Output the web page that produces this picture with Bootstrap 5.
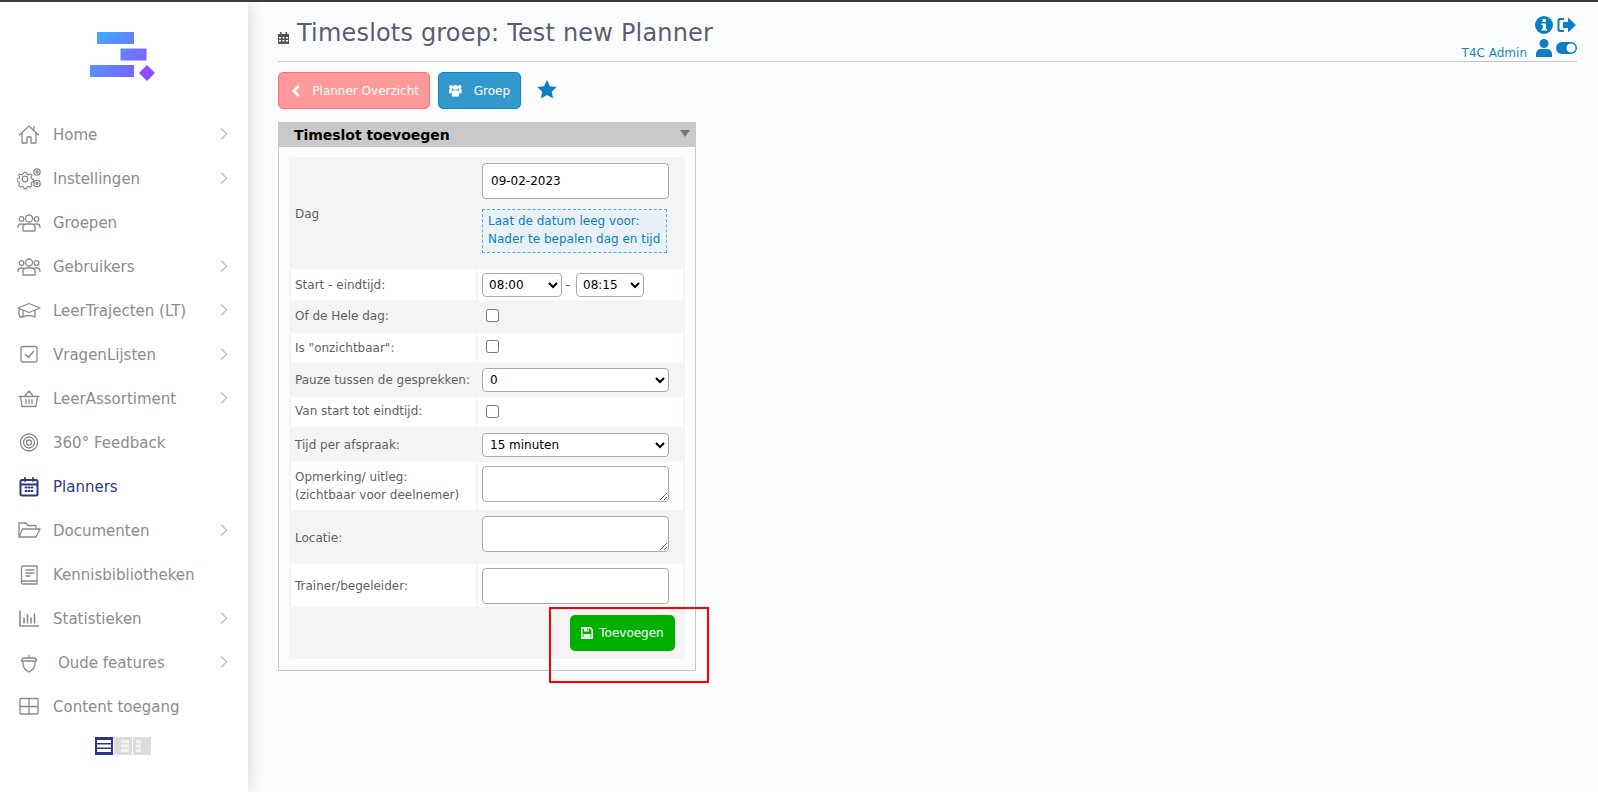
<!DOCTYPE html>
<html lang="nl"><head><meta charset="utf-8"><title>Timeslots</title>
<link href="https://cdn.jsdelivr.net/npm/bootstrap@5.3.0/dist/css/bootstrap.min.css" rel="stylesheet">
<style>
html,body{height:100%;overflow:hidden}
body{background:#fbfcfe;font-family:"DejaVu Sans",sans-serif;font-size:12px;color:#5f5f5f;border-top:2px solid #3c3c3c}
.shell{height:790px}
.side{width:248px;flex:none;background:#fff;box-shadow:0 0 18px rgba(0,0,0,.16);position:relative;z-index:2;padding-top:28px}
.logo-box{height:83px;padding-left:90px}
.menu-row{height:44px;padding:0 20px 0 17px;color:#8c8c8c;font-size:15px;text-decoration:none}
.menu-row.on{color:#33397e}
.ico{width:24px;height:24px;flex:none;margin-right:12px;fill:none;stroke:#8a8a8a;stroke-width:1.3;stroke-linecap:round;stroke-linejoin:round}
.on .ico{stroke:#2f3580}
.chev{width:9px;height:14px;fill:none;stroke:#8a8a8a;stroke-width:1;margin-left:auto;margin-top:-2px}
.oude{margin-left:5px}
.lay-row{margin:8px 0 0 95px;gap:1px}
.lay{width:18px;height:18px;background:#dcdcdc;display:block}
.work{flex:1;min-width:0;padding:0 21px 0 30px;position:relative}
.head{height:60px;border-bottom:1px solid #c8c8c8}
.ttl{font-size:24px;font-weight:400;color:#5b5d74;margin:0;padding-top:15px;line-height:32px;letter-spacing:.18px}
.ttl svg{margin-right:8px;vertical-align:-3px}
.tools{width:90px;padding-top:14px}
.tool-first{margin-right:1px}
.who{color:#1a86c5;font-size:12px;white-space:nowrap;position:absolute;right:71px;top:42px}
.tool-grid{gap:5px}
.acts{margin-top:10px;gap:8px;height:37px}
.act{height:37px;font-size:12px;color:#fff;border-radius:5px;padding:0 10px;font-family:"DejaVu Sans",sans-serif}
.act:hover{color:#fff}
.act-red{background:#ff9a9a;border:1px solid #ff6d6d;width:152px;padding-left:12px}
.act-blue{background:#3399cc;border:1px solid #0b87c6;width:83px}
.fav{margin-top:-2px}
.panel{width:418px;margin-top:13px;border:1px solid #c8c8c8;border-top:0;height:549px;background:transparent}
.panel-top{height:25px;margin:0 -1px;background:#c9c9c9;color:#000;font-weight:700;font-size:14px;padding:2px 6px 0 16px;line-height:23px;letter-spacing:-.04px}
.tri{width:0;height:0;border:5px solid transparent;border-top:7px solid #777;border-bottom:0;margin-top:-5px}
.form-tbl{margin:10px 0 0 10px;width:396px;table-layout:fixed;border-collapse:separate;border-spacing:2px;background:#f4f4f4}
.form-tbl td{padding:0 5px;background:#fff;vertical-align:middle;line-height:18px}
.form-tbl tr.alt td{background:#f4f4f4}
.form-tbl td:first-child{width:185px;padding-left:4px}
.form-tbl td.top-cell{vertical-align:top;padding-top:4px}
.form-tbl td.lift{padding-bottom:2px}
.form-tbl td.drop{padding-top:2px}
.native{font-family:"DejaVu Sans",sans-serif;font-size:12px;border:1px solid #aaa;border-radius:4px;background:#fff;color:#000;display:block}
.wide{width:187px;margin-left:-1px}
.sel{height:24px;width:187px;padding-left:3px}
.box{margin:-2px 0 0 3px;display:block;width:13px;height:13px}
.dateinp{height:36px;padding-left:8px}
.tip{width:185px;height:44px;margin:10px 0 0 -1px;border:1px dashed #58b2dc;background:#e8f1f6;color:#0a7fc2;padding:2px 5px;line-height:18px;white-space:nowrap}
.time{display:inline-block;height:24px;padding-left:2px;vertical-align:middle}
.time-end{width:68px;margin-left:2px}
.time-start{width:80px;margin-left:-1px}
.save{background:#00b000;color:#fff;font-size:12px;width:105px;height:36px;border-radius:5px;border:0;padding:0;font-weight:500;gap:6px;margin-right:3px}
.save:hover{background:#00b000;color:#fff}
.area{height:36px}
.mark-box{position:absolute;left:301px;top:605px;width:160px;height:76px;border:2px solid #f00;pointer-events:none}
</style></head>
<body>
<div class="shell d-flex">
<aside class="side">
 <div class="logo-box">
  <svg width="72" height="54" viewBox="90 30 72 54"><defs><linearGradient id="g" gradientUnits="userSpaceOnUse" x1="95" y1="30" x2="150" y2="80"><stop offset="0" stop-color="#3fb0ff"/><stop offset="1" stop-color="#8b4dff"/></linearGradient></defs>
  <rect x="97" y="32" width="37" height="12" fill="url(#g)"/><rect x="120.500" y="48.500" width="26" height="12" fill="url(#g)"/><rect x="90" y="65" width="44" height="12" fill="url(#g)"/><path d="M147 65l8 8-8 8-8-8z" fill="#8b4dff"/></svg>
 </div>
 <nav class="d-flex flex-column">
 <a class="menu-row d-flex align-items-center" href="#"><svg class="ico" viewBox="0 0 24 24"><path d="M2.500 12L12 3l9.500 9M5 10v10h5v-6h4v6h5V10M17 6V3.500"/></svg><span>Home</span><svg class="chev" viewBox="0 0 9 14"><path d="M2 1.500L7.500 7 2 12.500"/></svg></a>
 <a class="menu-row d-flex align-items-center" href="#"><svg class="ico" viewBox="0 0 24 24"><circle cx="8" cy="12" r="2.800"/><path d="M7 5.500h2.400l.6 2 1.800.8 1.900-1 1.700 1.700-1 1.900.8 1.800 2 .6v2.400l-2 .6-.8 1.800 1 1.900-1.700 1.700-1.900-1-1.800.8-.6 2H7l-.6-2-1.800-.8-1.900 1L1 19.800l1-1.900-.8-1.800-2-.6v-2.400l2-.6.8-1.800-1-1.900L1.700 7.300l1.900 1 1.800-.8z" transform="translate(.8 .2) scale(.92)"/><circle cx="20" cy="5" r="3.200"/><circle cx="20" cy="5" r="1"/><circle cx="20" cy="16.500" r="3.200"/><circle cx="20" cy="16.500" r="1"/></svg><span>Instellingen</span><svg class="chev" viewBox="0 0 9 14"><path d="M2 1.500L7.500 7 2 12.500"/></svg></a>
 <a class="menu-row d-flex align-items-center" href="#"><svg class="ico" viewBox="0 0 24 24"><circle cx="12" cy="7.500" r="3.500"/><circle cx="4.500" cy="8" r="2.300"/><circle cx="19.500" cy="8" r="2.300"/><path d="M6 20v-3.500c0-2 1.500-3.500 3.500-3.500h5c2 0 3.500 1.500 3.500 3.500V20zM1 16.500c0-2 1-3.500 3-3.500h2M23 16.500c0-2-1-3.500-3-3.500h-2"/></svg><span>Groepen</span></a>
 <a class="menu-row d-flex align-items-center" href="#"><svg class="ico" viewBox="0 0 24 24"><circle cx="12" cy="7.500" r="3.500"/><circle cx="4.500" cy="8" r="2.300"/><circle cx="19.500" cy="8" r="2.300"/><path d="M6 20v-3.500c0-2 1.500-3.500 3.500-3.500h5c2 0 3.500 1.500 3.500 3.500V20zM1 16.500c0-2 1-3.500 3-3.500h2M23 16.500c0-2-1-3.500-3-3.500h-2"/></svg><span>Gebruikers</span><svg class="chev" viewBox="0 0 9 14"><path d="M2 1.500L7.500 7 2 12.500"/></svg></a>
 <a class="menu-row d-flex align-items-center" href="#"><svg class="ico" viewBox="0 0 24 24"><path d="M1 9l11-4.500L23 9l-11 4.500zM6 11.500V18c3-2 9-2 12 0v-6.500M3 10c-1.500 2-1.500 5 0 8h3"/></svg><span>LeerTrajecten (LT)</span><svg class="chev" viewBox="0 0 9 14"><path d="M2 1.500L7.500 7 2 12.500"/></svg></a>
 <a class="menu-row d-flex align-items-center" href="#"><svg class="ico" viewBox="0 0 24 24"><rect x="4" y="3.500" width="16" height="15.500" rx="1.500"/><path d="M8.500 11.500l3 3 5-6"/></svg><span>VragenLijsten</span><svg class="chev" viewBox="0 0 9 14"><path d="M2 1.500L7.500 7 2 12.500"/></svg></a>
 <a class="menu-row d-flex align-items-center" href="#"><svg class="ico" viewBox="0 0 24 24"><path d="M2 9.500h20M3.500 9.500l1.500 10h14l1.500-10M7.500 9.500L12 4l4.500 5.500M9 12.500v4M12 12.500v4M15 12.500v4"/></svg><span>LeerAssortiment</span><svg class="chev" viewBox="0 0 9 14"><path d="M2 1.500L7.500 7 2 12.500"/></svg></a>
 <a class="menu-row d-flex align-items-center" href="#"><svg class="ico" viewBox="0 0 24 24"><circle cx="12" cy="11.500" r="8.500"/><circle cx="12" cy="11.500" r="5.500"/><circle cx="12" cy="11.500" r="2.500"/></svg><span>360° Feedback</span></a>
 <a class="menu-row on d-flex align-items-center" href="#"><svg class="ico" viewBox="0 0 24 24"><path d="M5 5h14a1.500 1.500 0 0 1 1.500 1.500V19a1.500 1.500 0 0 1-1.500 1.500H5A1.500 1.500 0 0 1 3.500 19V6.500A1.500 1.500 0 0 1 5 5zM3.500 9.500h17" stroke-width="2"/><path d="M8 3v3M16 3v3M8.500 12.500h1M11.500 12.500h1M14.500 12.500h1M8.500 16h1M11.500 16h1M14.500 16h1" stroke-width="1.800"/></svg><span>Planners</span></a>
 <a class="menu-row d-flex align-items-center" href="#"><svg class="ico" viewBox="0 0 24 24"><path d="M2 18V4h7l2 2.500h8V10M2 18l3.500-8H23l-4 8z"/></svg><span>Documenten</span><svg class="chev" viewBox="0 0 9 14"><path d="M2 1.500L7.500 7 2 12.500"/></svg></a>
 <a class="menu-row d-flex align-items-center" href="#"><svg class="ico" viewBox="0 0 24 24"><path d="M6 3h14v15H6.500A2 2 0 0 0 4.500 20V5A2 2 0 0 1 6 3zM4.500 20a1.500 1.500 0 0 0 1.500 1h14v-3M9 7h8M9 10h8M9 13h4"/></svg><span>Kennisbibliotheken</span></a>
 <a class="menu-row d-flex align-items-center" href="#"><svg class="ico" viewBox="0 0 24 24"><path d="M3 4v15h18.500M7 11v5M10.500 8v8M14 11v5M17.500 7v9" stroke-width="1.600"/></svg><span>Statistieken</span><svg class="chev" viewBox="0 0 9 14"><path d="M2 1.500L7.500 7 2 12.500"/></svg></a>
 <a class="menu-row d-flex align-items-center" href="#"><svg class="ico" viewBox="0 0 24 24"><path d="M4.500 10a3 3 0 0 1 3-3h9a3 3 0 0 1 3 3zM6 10v3c0 4 2.500 6 6 8 3.500-2 6-4 6-8v-3M12 7V4.500"/></svg><span class="oude">Oude features</span><svg class="chev" viewBox="0 0 9 14"><path d="M2 1.500L7.500 7 2 12.500"/></svg></a>
 <a class="menu-row d-flex align-items-center" href="#"><svg class="ico" viewBox="0 0 24 24"><rect x="3" y="3.500" width="18" height="15.500" rx="1"/><path d="M12 3.500V19M3 11.500h18"/></svg><span>Content toegang</span></a>
 </nav>
 <div class="lay-row d-flex">
  <svg class="lay" viewBox="0 0 18 18"><rect width="18" height="18" fill="#2f3580"/><rect x="2" y="3" width="14" height="3" fill="#fff"/><rect x="2" y="7.500" width="14" height="3" fill="#fff"/><rect x="2" y="12" width="14" height="3" fill="#fff"/></svg>
  <svg class="lay" viewBox="0 0 18 18"><rect width="18" height="18" fill="#dcdcdc"/><rect x="7" y="3" width="8" height="3" fill="#f4f4f4"/><rect x="7" y="7.500" width="8" height="3" fill="#f4f4f4"/><rect x="7" y="12" width="8" height="3" fill="#f4f4f4"/></svg>
  <svg class="lay" viewBox="0 0 18 18"><rect width="18" height="18" fill="#dcdcdc"/><rect x="3" y="3" width="5" height="3" fill="#f4f4f4"/><rect x="3" y="7.500" width="5" height="3" fill="#f4f4f4"/><rect x="3" y="12" width="5" height="3" fill="#f4f4f4"/></svg>
 </div>
</aside>
<main class="work">
 <header class="head d-flex justify-content-between">
  <h1 class="ttl"><svg width="11" height="13" viewBox="0 0 11 13"><path d="M0 3h11v10H0z" fill="#555"/><path d="M2 1h1.500v3H2zM7.500 1H9v3H7.500z" fill="#555"/><path d="M1 6h2v1.500H1zM4.500 6h2v1.500h-2zM8 6h2v1.500H8zM1 9h2v1.500H1zM4.500 9h2v1.500h-2zM8 9h2v1.500H8z" fill="#fbfcfe"/></svg>Timeslots groep: Test new Planner</h1>
  <span class="who">T4C Admin</span>
  <div class="tools d-flex flex-column align-items-end tool-grid">
   <div class="d-flex align-items-center gap-1 tool-first">
    <svg width="18" height="18" viewBox="0 0 18 18"><circle cx="9" cy="9" r="9" fill="#0b7fc1"/><rect x="7.500" y="3" width="3.500" height="3" fill="#fff"/><path d="M6.500 7.500h4.500V13h1.200v1.500H6.500V13h1.200V9H6.500z" fill="#fff"/></svg>
    <svg width="19" height="16" viewBox="0 0 19 16"><path d="M7 1H3a2.500 2.500 0 0 0-2.500 2.500v9A2.500 2.500 0 0 0 3 15h4v-2H3.500a1 1 0 0 1-1-1V4a1 1 0 0 1 1-1H7z" fill="#0b7fc1"/><path d="M11 .5L19 8l-8 7.500V11H6V5h5z" fill="#0b7fc1"/></svg>
   </div>
   <div class="d-flex align-items-center gap-1">
    <svg width="16" height="18" viewBox="0 0 16 18"><circle cx="8" cy="4.500" r="4.500" fill="#0b7fc1"/><path d="M0 18v-3c0-3 2-5 4.500-5h7c2.500 0 4.500 2 4.500 5v3z" fill="#0b7fc1"/></svg>
    <svg width="21" height="12" viewBox="0 0 21 12"><rect width="21" height="12" rx="6" fill="#0b7fc1"/><circle cx="15" cy="6" r="4.500" fill="#fff"/></svg>
   </div>
  </div>
 </header>
 <div class="acts d-flex align-items-center">
  <a class="btn act act-red d-flex align-items-center text-nowrap" href="#"><svg class="me-2" width="10" height="14" viewBox="0 0 10 14"><path d="M8.500 1.500L3 7l5.500 5.500" fill="none" stroke="#fff" stroke-width="3"/></svg><span class="ms-1">Planner Overzicht</span></a>
  <a class="btn act act-blue d-flex align-items-center" href="#"><svg width="16" height="15" viewBox="0 0 16 15" class="me-2"><circle cx="8" cy="3.800" r="3.200" fill="#fff"/><circle cx="2.600" cy="3" r="2.500" fill="#fff"/><circle cx="13.400" cy="3" r="2.500" fill="#fff"/><path d="M3.500 15V9.500C3.500 8 4.500 7.500 6 7.500h4c1.500 0 2.500.5 2.500 2V15zM0 11V7.500c0-1 1-1.800 2-1.800h1.500V11zM16 11V7.500c0-1-1-1.800-2-1.800h-1.500V11z" fill="#fff"/></svg><span class="ms-1">Groep</span></a>
  <svg class="ms-2 fav" width="20" height="19" viewBox="0 0 20 19"><path d="M10 0l2.900 6.300 6.900.8-5.100 4.600 1.400 6.800L10 15.100l-6.100 3.400 1.400-6.800L.2 7.100l6.900-.8z" fill="#0a7fc2"/></svg>
 </div>
 <section class="panel">
  <div class="panel-top d-flex justify-content-between align-items-center"><span>Timeslot toevoegen</span><span class="tri"></span></div>
  <table class="form-tbl">
   <tr class="alt" style="height:108px"><td class="drop">Dag</td><td class="top-cell"><input class="native wide dateinp" value="09-02-2023"><div class="tip">Laat de datum leeg voor:<br>Nader te bepalen dag en tijd</div></td></tr>
   <tr style="height:31px"><td>Start - eindtijd:</td><td class="text-nowrap"><select class="native time time-start"><option>08:00</option></select> <span>-</span> <select class="native time time-end"><option>08:15</option></select></td></tr>
   <tr class="alt" style="height:29px"><td class="lift">Of de Hele dag:</td><td><input type="checkbox" class="box"></td></tr>
   <tr style="height:29px"><td>Is "onzichtbaar":</td><td><input type="checkbox" class="box"></td></tr>
   <tr class="alt" style="height:31px"><td class="text-nowrap">Pauze tussen de gesprekken:</td><td><select class="native wide sel"><option>0</option></select></td></tr>
   <tr style="height:30px"><td class="lift">Van start tot eindtijd:</td><td><input type="checkbox" class="box"></td></tr>
   <tr class="alt" style="height:31px"><td>Tijd per afspraak:</td><td><select class="native wide sel"><option>15 minuten</option></select></td></tr>
   <tr style="height:48px"><td class="text-nowrap">Opmerking/ uitleg:<br>(zichtbaar voor deelnemer)</td><td class="top-cell"><textarea class="native wide area"></textarea></td></tr>
   <tr class="alt" style="height:50px"><td class="drop">Locatie:</td><td class="top-cell"><textarea class="native wide area"></textarea></td></tr>
   <tr style="height:43px"><td>Trainer/begeleider:</td><td><input class="native wide area"></td></tr>
   <tr class="alt" style="height:48px"><td colspan="2" class="text-end"><button class="btn save d-inline-flex align-items-center justify-content-center"><svg width="12" height="12" viewBox="0 0 12 12"><path d="M.8.800h8.400l2 2v8.400H.8z" fill="none" stroke="#fff" stroke-width="1.500"/><path d="M3 1h5v3.500H3zM2.500 7h7v3.500h-7z" fill="#fff"/><rect x="6" y="1.500" width="1.200" height="2" fill="#00b000"/></svg>Toevoegen</button></td></tr>
  </table>
 </section>
 <div class="mark-box"></div>
</main>
</div>
<script src="https://cdn.jsdelivr.net/npm/bootstrap@5.3.0/dist/js/bootstrap.bundle.min.js"></script>
</body></html>
